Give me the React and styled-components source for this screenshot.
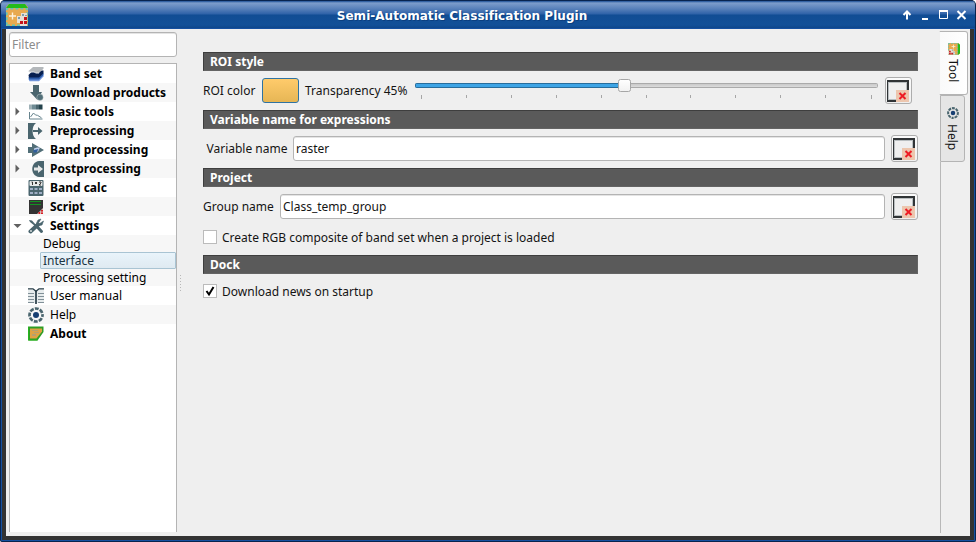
import React from "react";
import styled, { createGlobalStyle, css } from "styled-components";

const GlobalStyle = createGlobalStyle`
  * { box-sizing: border-box; }
  html, body { margin: 0; width: 976px; height: 542px; overflow: hidden; background: #fff; }
  body { font: 12px/17px "Noto Sans", "Open Sans", sans-serif; color: #141414; }
  svg { display: block; flex: none; }
`;

const Window = styled.div`
  width: 976px;
  height: 542px;
  display: flex;
  flex-direction: column;
  background: #333;
  border: 1px solid #08244f;
  border-top-width: 0;
  border-radius: 5px 5px 2px 2px;
  overflow: hidden;
`;

const TitleBar = styled.header`
  height: 29px;
  flex: none;
  display: grid;
  grid-template-columns: 50px 1fr 100px;
  align-items: center;
  padding: 0 7px 0 5px;
  color: #fff;
  border-top: 1px solid #08244f;
  background: linear-gradient(#1c4f96 0, #7d9dcb 2px, #567fb9 8px, #2e62a8 13px, #114d94 14px, #125098 24px, #0e468b 27px, #08306b 28px);
`;

const WindowTitle = styled.h1`
  margin: 0;
  padding-top: 2px;
  text-align: center;
  font-family: "DejaVu Sans", sans-serif;
  font-size: 12px;
  line-height: 18px;
  font-weight: 700;
  letter-spacing: 0.03px;
  white-space: nowrap;
  text-shadow: 1px 1px 0 #0b3f80;
`;

const WindowControls = styled.div`
  display: flex;
  justify-content: flex-end;
`;

const Body = styled.main`
  flex: 1;
  min-height: 0;
  display: flex;
  border: solid #333;
  border-width: 0 4px 4px 4px;
  outline: 1px solid #1550a0;
  background: #efefef;
  margin: 0 1px 1px;
`;

const Sidebar = styled.aside`
  width: 171px;
  padding: 3px 0 4px 3px;
  display: flex;
  flex-direction: column;
  gap: 6px;
  flex: none;
`;

const field = css`
  border: 1px solid #b4b4b4;
  border-radius: 3px;
  background: #fff;
  font: inherit;
  color: #141414;
  height: 25px;
  outline: none;
  box-shadow: inset 0 1px 0 #e4e4e4;
`;

const FilterInput = styled.input`
  ${field}
  width: 168px;
  padding: 0 2px;
  &::placeholder { color: #8c8c8c; opacity: 1; }
`;

const Tree = styled.nav`
  flex: 1;
  width: 168px;
  background: #fff;
  border: 1px solid #b4b4b4;
  border-bottom: 0;
  color: #000;
`;

const TreeRow = styled.div`
  height: ${(p) => (p.$child ? 17 : 19)}px;
  padding-left: ${(p) => (p.$child ? 30 : 3)}px;
  display: flex;
  align-items: center;
  background: ${(p) => (p.$alt ? "#f7f7f7" : "#fff")};
  font-weight: ${(p) => (p.$bold ? 700 : 400)};
`;

const ChildLabel = styled.span`
  flex: 1;
  height: 17px;
  line-height: 15px;
  padding-left: 2px;
  border: 1px solid ${(p) => (p.$selected ? "#a9c4d3" : "transparent")};
  border-radius: 1px;
  ${(p) => p.$selected && "background: linear-gradient(#e9f4fb, #dfeaf1); color: #1b3442;"}
  white-space: nowrap;
`;

const Expander = styled.span`
  width: 15px;
  height: 9px;
  flex: none;
`;

const RowIcon = styled.span`
  width: 16px;
  height: 16px;
  flex: none;
  margin-right: 6px;
`;

const Splitter = styled.div`
  width: 7px;
  flex: none;
  display: flex;
  align-items: center;
  padding-left: 3px;
`;

const SplitterDots = styled.span`
  width: 1px;
  height: 17px;
  margin-top: 1px;
  background: repeating-linear-gradient(#b8b8b8 0 1px, transparent 1px 3px);
`;

const Panel = styled.section`
  width: 756px;
  flex: none;
  padding: 23px 22px 0 19px;
`;

const SectionHeader = styled.h2`
  margin: 0;
  height: 19px;
  padding-left: 6px;
  border: 1px solid #3e3e3e;
  border-right-color: #646464;
  border-bottom-color: #646464;
  background: #5a5a5a;
  color: #fff;
  font-size: 12px;
  line-height: 17px;
  font-weight: 700;
`;

const FormRow = styled.div`
  height: 39px;
  padding-right: ${(p) => p.$right || 0}px;
  display: flex;
  align-items: center;
`;

const Label = styled.label`
  width: ${(p) => p.$width}px;
  padding-left: ${(p) => p.$indent || 0}px;
  flex: none;
  white-space: nowrap;
`;

const TextInput = styled.input`
  ${field}
  flex: 1;
  min-width: 0;
  margin-right: 6px;
  padding: 0 2px;
`;

const ColorButton = styled.button`
  width: 37px;
  height: 25px;
  padding: 0;
  margin-right: 6px;
  flex: none;
  border: 1px solid #2e73a3;
  border-radius: 3px;
  background: linear-gradient(#ffcb6b, #e6b655);
`;

const ResetButton = styled.button`
  width: 27px;
  height: 27px;
  flex: none;
  padding: 1px 2px 1px 1px;
  border: 1px solid #adadad;
  border-radius: 3px;
  background: linear-gradient(#fbfbfb, #f0f0f0);
`;

const SliderBox = styled.div`
  flex: 1;
  height: 27px;
`;

const CheckRow = styled.label`
  height: ${(p) => p.$height}px;
  display: flex;
  align-items: center;
  padding-bottom: ${(p) => p.$bottom || 0}px;
`;

const CheckBox = styled.span`
  width: 14px;
  height: 14px;
  margin-right: 5px;
  border: 1px solid #bbb;
  background: #fff;
  flex: none;
`;

const TabRail = styled.div`
  flex: 1;
  padding-top: 2px;
  display: flex;
  flex-direction: column;
  align-items: flex-start;
`;

const Tab = styled.div`
  width: ${(p) => (p.$active ? 29 : 25)}px;
  height: ${(p) => (p.$active ? 64 : 67)}px;
  margin-left: ${(p) => (p.$active ? -1 : 0)}px;
  display: flex;
  flex-direction: column;
  align-items: center;
  gap: ${(p) => (p.$active ? 4 : 5)}px;
  padding-top: 11px;
  border: 1px solid #b4b4b4;
  border-left-color: ${(p) => (p.$active ? "#efefef" : "#b4b4b4")};
  border-radius: 0 3px 3px 0;
  background: ${(p) => (p.$active ? "linear-gradient(90deg,#fafafa,#fff)" : "#e5e5e5")};
`;

const TabLabel = styled.span`
  writing-mode: vertical-rl;
  line-height: 17px;
`;

const TabRule = styled.div`
  width: 1px;
  height: 371px;
  background: #b8b8b8;
`;

const TabIcon = styled.span`
  transform: rotate(90deg);
`;

const T = "#4a656e";

function Icon({ size = 16, children }) {
  return (
    <svg width={size} height={size} viewBox="0 0 16 16">
      {children}
    </svg>
  );
}

const icons = {
  bands: (
    <>
      <path d="M5 8.500h10.500v2L11 15.200H1.500L0.500 13z" fill="#7196dc" />
      <path d="M5 7h10.500v2L11 13.500H1L.5 11.500z" fill="#2c5ba8" />
      <path d="M5 4.500h10.500v2.800L11 11.500H1L.5 9z" fill="#071f50" />
      <path d="M5 1h10.500v1.800L11 7H8L7 6H1L.5 5z" fill="#b4b8bb" />
      <path d="M1 6h5l2 1h3" fill="none" stroke="#e4e7ea" />
    </>
  ),
  download: (
    <>
      <path d="M5 0H11v7h3l-4.500 8L2 7h3z" fill={T} />
      <circle cx="12" cy="12.300" r="3.200" fill="#526f78" stroke="#dce2e4" strokeWidth=".4" />
    </>
  ),
  basic: (
    <>
      <path d="M1 .5h3v5H1z" fill="#9fb1b7" />
      <path d="M4 .5h4v5H4z" fill="#6f8b94" />
      <path d="M8 .5h3v5H8z" fill={T} />
      <path d="M11 .5h3.500v5H11z" fill="#24424b" />
      <path d="M1.500 8v7h13M2.500 13l3-4 2 2 2 .3 4 2.500" fill="none" stroke="#66838d" />
    </>
  ),
  pre: (
    <>
      <path d="M0 0h8C3.500 3 3.500 13 8 16H0z" fill={T} />
      <path d="M5 7h5V4l4.500 4-4.500 4V9H5z" fill={T} />
    </>
  ),
  processing: (
    <>
      <path d="M0 5h4V1l12 7L4 15v-4H0z" fill="#526f78" />
      <path d="M6 6.500l3-1h3l-2 4H6z" fill="#c5d4ef" />
      <path d="M5.500 8l5-1-2 3.500h-3z" fill="#315e9d" />
    </>
  ),
  post: (
    <>
      <path d="M16 0v16H11C2 15 2 1 11 0z" fill={T} />
      <path d="M6 6.500h4V4l5 4-5 4V9.500H6z" fill="#e6e8e8" />
    </>
  ),
  calc: (
    <>
      <rect x=".5" y="0" width="15" height="16" rx="1" fill={T} />
      <rect x="1.500" y="1" width="13" height="5" rx="1" fill="#e6e8e8" />
      <path d="M3.500 2h1v3M7 2l2 2M9 2L7 4M11 2h2v1l-2 2h2" fill="none" stroke="#222" strokeWidth=".9" />
      <path d="M2 8h3v2H2zm4.500 0h3v2h-3zM11 8h3v2h-3zM2 12h3v2H2zm4.500 0h3v2h-3zM11 12h3v2h-3z" fill="#9faec5" />
    </>
  ),
  script: (
    <>
      <path d="M1 1h14v14H1z" fill="#333" />
      <path d="M2 2.500h11M2 5.500h11" stroke="#129321" />
      <path d="M15 9v6H9z" fill="#d8b9b5" />
      <path d="M13 11h2v1.500h-2zM10.500 13h1.500v2h-1.500zM13 13.500h2V15h-2z" fill="#d91f26" />
    </>
  ),
  settings: (
    <>
      <path d="M1 2l3 .5L8 7l-1 1L2 4z" fill={T} />
      <path d="M8 7.500l5.500 6" stroke={T} strokeWidth="3" strokeLinecap="round" />
      <path d="M2.500 13.500l7.500-7" stroke={T} strokeWidth="4" strokeLinecap="round" />
      <path d="M9.500 6.500L13 1l-3 1-1.500 3 1 3 4.500-1L15.500 3l-3 2z" fill={T} stroke={T} strokeWidth=".6" />
      <circle cx="3" cy="13" r=".9" fill="#e5e7e8" />
    </>
  ),
  manual: (
    <>
      <path d="M0 2h5l3 2v11H0zm16 0h-5L8 4v11h8z" fill="#e7eced" />
      <path d="M0 .8h5l3 2.500L11 .8h5" fill="none" stroke="#273d47" strokeWidth="1.300" />
      <path d="M0 5.500h6M0 8.500h6M0 11.500h6M0 14.500h6M10 5.500h6M10 8.500h6M10 11.500h6M10 14.500h6" stroke="#819098" />
      <path d="M8 3v13" stroke="#273d47" strokeWidth="1.700" />
    </>
  ),
  help: (
    <>
      <circle cx="8" cy="8" r="6.500" fill="none" stroke={T} strokeWidth="2.700" strokeDasharray="3.900 1.205" strokeDashoffset="1.950" />
      <circle cx="8" cy="8" r="3" fill="#173f72" />
    </>
  ),
  about: (
    <>
      <path d="M0 .5h15.500v5.500l-6 8.500H0z" fill="#2e9d25" />
      <path d="M2 2.500h12v3l-5.500 7H2z" fill="#dfa343" />
      <path d="M4 4h6v1H4zm2 2h5v1H6zM4 8h4v2H4z" fill="#b5a070" />
      <path d="M.5 1v13h9" fill="none" stroke="#27b51f" />
    </>
  ),
};

function PluginIcon({ size = 22 }) {
  return (
    <svg width={size} height={size} viewBox="0 0 22 22">
      <path d="M0 3l3-3h16l3 3v19H0z" fill="#e8a94f" />
      <path d="M0 4l3-4h16l3 4z" fill="#24bc1a" />
      <path d="M.8 21.200V4.800H21v16.400z" fill="none" stroke="#62c6b6" strokeWidth="1.600" strokeDasharray="3 2" />
      <path d="M3 12h7M6.500 8.500v7" stroke="#fff2dc" strokeWidth="1.400" />
      <path d="M11 12h4V9h6v13h-7v-3h-3z" fill="#e6dfd5" />
      <path d="M16 10h2v2h-2zm-4 3h2v2h-2zM19 11h2v1h-2z" fill="#7b9cae" />
      <path d="M18 13h3v3h-3zM14 17h3v3h-3zM18 17h3v3h-3z" fill="#c5131a" />
    </svg>
  );
}

const items = [
  { label: "Band set", icon: "bands", bold: true },
  { label: "Download products", icon: "download", bold: true },
  { label: "Basic tools", icon: "basic", bold: true, arrow: "closed" },
  { label: "Preprocessing", icon: "pre", bold: true, arrow: "closed" },
  { label: "Band processing", icon: "processing", bold: true, arrow: "closed" },
  { label: "Postprocessing", icon: "post", bold: true, arrow: "closed" },
  { label: "Band calc", icon: "calc", bold: true },
  { label: "Script", icon: "script", bold: true },
  { label: "Settings", icon: "settings", bold: true, arrow: "open" },
  { label: "Debug", child: true },
  { label: "Interface", child: true, selected: true },
  { label: "Processing setting", child: true },
  { label: "User manual", icon: "manual" },
  { label: "Help", icon: "help" },
  { label: "About", icon: "about", bold: true },
];

function Arrow({ state }) {
  return (
    <svg width="9" height="9">
      <path d={state === "open" ? "M.5 3h8l-4 4z" : "M2.500 .5v8l4-4z"} fill="#606060" />
    </svg>
  );
}

function Reset() {
  return (
    <ResetButton type="button" aria-label="Reset">
      <svg width="22" height="22">
        <path d="M0 0h22v22H0z" fill="#303436" />
        <path d="M1 2h19v18H1z" fill="#b9bec0" />
        <path d="M2 3h17v16H2z" fill="#efefef" />
        <path d="M9 10h13v12H9z" fill="#edc6ae" />
        <path d="M12.500 13l6 6M18.500 13l-6 6" stroke="#ed1c24" strokeWidth="2" />
      </svg>
    </ResetButton>
  );
}

function Slider() {
  return (
    <SliderBox>
      <svg width="470" height="27">
        <defs>
          <linearGradient id="groove" x2="0" y2="1">
            <stop stopColor="#c6c6c6" />
            <stop offset="1" stopColor="#dedede" />
          </linearGradient>
          <linearGradient id="knob" x2="0" y2="1">
            <stop stopColor="#fff" />
            <stop offset="1" stopColor="#f1f1f1" />
          </linearGradient>
        </defs>
        <rect x=".5" y="6.500" width="462" height="4" rx="1" fill="url(#groove)" stroke="#aaa" />
        <rect x=".5" y="6.500" width="208" height="4" rx="1" fill="#3da4e5" stroke="#276d9c" />
        {[6, 51, 96, 141, 186, 231, 275, 320, 365, 410, 456].map((x, i) => (
          <path key={x} d={`M${x + 0.5} 18v${i === 0 || i === 10 ? 4 : 3}`} stroke="#a6a6a6" />
        ))}
        <rect x="203.500" y="2.500" width="12" height="12" rx="2" fill="url(#knob)" stroke="#a6a6a6" />
      </svg>
    </SliderBox>
  );
}

export default function App() {
  return (
    <>
      <GlobalStyle />
      <Window>
        <TitleBar>
          <PluginIcon />
          <WindowTitle>Semi-Automatic Classification Plugin</WindowTitle>
          <WindowControls>
            <svg width="66" height="12" fill="none" stroke="#fff" strokeWidth="2">
              <path d="M5 10.500V3M1.500 6L5 2.500 8.500 6" />
              <path d="M20 10h6" />
              <path d="M37.500 1.500h8v8h-8z" strokeWidth="1" />
              <path d="M37 2h9" />
              <path d="M55.500 2l8 8M63.500 2l-8 8" />
            </svg>
          </WindowControls>
        </TitleBar>
        <Body>
          <Sidebar>
            <FilterInput placeholder="Filter" />
            <Tree>
              {items.map((it, i) => (
                <TreeRow key={it.label} $alt={i % 2 === 1} $bold={it.bold} $child={it.child}>
                  {it.child ? (
                    <ChildLabel $selected={it.selected}>{it.label}</ChildLabel>
                  ) : (
                    <>
                      <Expander>{it.arrow && <Arrow state={it.arrow} />}</Expander>
                      <RowIcon>
                        <Icon>{icons[it.icon]}</Icon>
                      </RowIcon>
                      {it.label}
                    </>
                  )}
                </TreeRow>
              ))}
            </Tree>
          </Sidebar>
          <Splitter>
            <SplitterDots />
          </Splitter>
          <Panel>
            <SectionHeader>ROI style</SectionHeader>
            <FormRow $right={6}>
              <Label $width={59}>ROI color</Label>
              <ColorButton type="button" aria-label="ROI color" />
              <Label $width={110}>Transparency 45%</Label>
              <Slider />
              <Reset />
            </FormRow>
            <SectionHeader>Variable name for expressions</SectionHeader>
            <FormRow>
              <Label $width={90} $indent={3.5}>Variable name</Label>
              <TextInput defaultValue="raster" />
              <Reset />
            </FormRow>
            <SectionHeader>Project</SectionHeader>
            <FormRow>
              <Label $width={77}>Group name</Label>
              <TextInput defaultValue="Class_temp_group" />
              <Reset />
            </FormRow>
            <CheckRow $height={29} $bottom={7}>
              <CheckBox />
              Create RGB composite of band set when a project is loaded
            </CheckRow>
            <SectionHeader>Dock</SectionHeader>
            <CheckRow $height={34}>
              <CheckBox>
                <svg width="12" height="12">
                  <path d="M2.500 6L5 9.500L9.500 2" fill="none" stroke="#000" strokeWidth="2" />
                </svg>
              </CheckBox>
              Download news on startup
            </CheckRow>
          </Panel>
          <TabRail>
            <Tab $active>
              <TabIcon>
                <PluginIcon size={12} />
              </TabIcon>
              <TabLabel>Tool</TabLabel>
            </Tab>
            <Tab>
              <TabIcon>
                <Icon size={12}>{icons.help}</Icon>
              </TabIcon>
              <TabLabel>Help</TabLabel>
            </Tab>
            <TabRule />
          </TabRail>
        </Body>
      </Window>
    </>
  );
}
